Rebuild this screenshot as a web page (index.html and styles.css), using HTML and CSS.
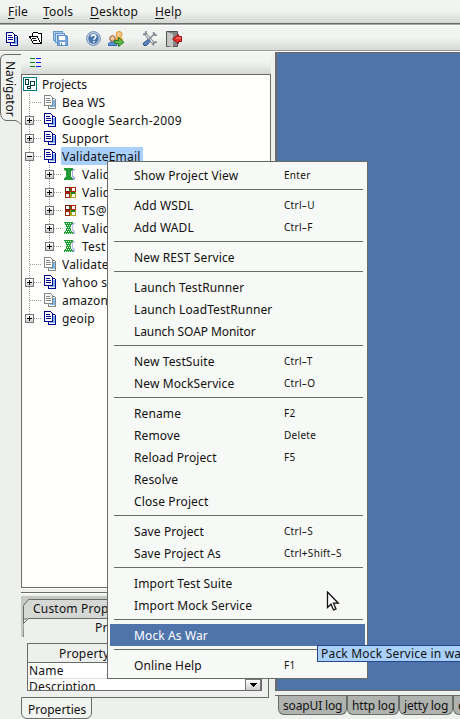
FILE: index.html
```html
<!DOCTYPE html>
<html lang="en">
<head>
<meta charset="utf-8">
<title>soapUI</title>
<link rel="stylesheet" href="styles.css">
</head>
<body>
<svg class="defs" width="0" height="0">
  <symbol id="docs" viewBox="0 0 13 14">
    <path fill="#fff" stroke="currentColor" d="M4.500 3.500h6l1 1v9h-7z"/>
    <path class="accent" d="M9 5h2v7H9zM6 11h4v1H6z"/>
    <path fill="#fff" stroke="currentColor" d="M.5.5h6l2 2v8h-8z"/>
    <path fill="currentColor" d="M2 3h4v1H2zM2 5h5v1H2zM2 7h5v1H2z"/>
  </symbol>
  <symbol id="suite" viewBox="0 0 12 12">
    <path fill="#a7a4f0" d="M8 1h3v1h-1v1H9v5h1v1h1v3H9V9H8z"/>
    <path fill="#239b34" d="M0 0h9v2H8v1H7v6h1v1h1v2H0v-2h1V9h1V3H1V2H0z"/>
  </symbol>
  <symbol id="suite-off" viewBox="0 0 12 12">
    <path fill="#b9b7f2" d="M8 1h3v1h-1v1H9v5h1v1h1v3H9V9H8z"/>
    <path fill="#239b34" d="M0 0h9v2H8v1H7v6h1v1h1v2H0v-2h1V9h1V3H1V2H0z"/>
    <path stroke="#d7f0da" stroke-dasharray="1 1" d="M0 1.500h8M3 3.500h4M2 5.500h5M3 7.500h4M0 9.500h8M1 11.500h8"/>
  </symbol>
  <symbol id="mock" viewBox="0 0 11 11">
    <path d="M0 0h5v5H0z" fill="#7d1208"/><path d="M5 0h6v5H5z" fill="#b8270c"/>
    <path d="M0 5h5v6H0z" fill="#97280b"/><path d="M5 5h6v6H5z" fill="#a8a41b"/>
    <path d="M6 5h4v2H6z" fill="#16802a"/><path d="M4 2h2v2H4z" fill="#16802a"/>
    <path fill="#fff" d="M1 1h3v3H1zM7 1h3v3H7zM1 7h3v3H1zM7 7h3v3H7z"/>
  </symbol>
</svg>

<div class="app">
  <nav class="menubar"><span><u>F</u>ile</span><span><u>T</u>ools</span><span><u>D</u>esktop</span><span><u>H</u>elp</span></nav>

  <div class="toolbar">
    <svg class="docs t1" width="13" height="14"><use href="#docs"/></svg>
    <svg class="t2" width="13" height="13" viewBox="0 0 13 13"><path fill="#fff" stroke="#000" d="M3.500 4v-2.500l1-1h4l1 1h2.500v10h-1"/><path fill="#fff" stroke="#000" d="M.5 4.500h8l3 7H4.500z"/><path d="M3 6h4v1H3zM4 8h4v1H4z"/></svg>
    <svg class="t3" width="15" height="15" viewBox="0 0 15 15"><path fill="#a9c6e8" stroke="#6597cd" d="M.5.5h9v9h-9z"/><path fill="#c9def5" stroke="#6597cd" d="M2.500 2.500h9v9h-9z"/><path fill="#76a4d8" stroke="#5a90ce" d="M4.500 4.500h9l1 1v9h-10z"/><path fill="#fff" d="M6 5h6v4H6zM7 11h5v3H7z"/><path fill="#467fbd" d="M8 12h1v2H8z"/></svg>
    <svg class="t4 smooth" width="15" height="15" viewBox="0 0 15 15"><circle cx="7.500" cy="7.500" r="6.900" fill="#c5d2e4" stroke="#6b8bb5"/><circle cx="7.500" cy="7.500" r="5.200" fill="#4c76ae"/><path d="M5.400 5.800c0-2.600 4.400-2.600 4.400 0 0 1.500-2 1.500-2 3M7.800 10v1.500" stroke="#fff" stroke-width="1.600" fill="none"/></svg>
    <svg class="t5 smooth" width="17" height="16" viewBox="0 0 17 16"><path d="M7 9c0-4 8-4 8 0v1H7z" fill="#e9a12d"/><circle cx="11" cy="3.500" r="3" fill="#f4c98a" stroke="#dc9225"/><path d="M0 14.500c0-5 9-5 9 0z" fill="#5794d8" stroke="#3267a9"/><circle cx="4.500" cy="7.500" r="2.800" fill="#f2c79c" stroke="#8c542a"/><path d="M6.500 9.500h4v-3l5.500 4.800-5.500 4.200v-3h-4z" fill="#62b847" stroke="#277d23"/></svg>
    <svg class="t6 smooth" width="16" height="15" viewBox="0 0 16 15"><path d="M2.500 2l9.500 11" stroke="#747c84" stroke-width="2.800"/><path d="M2.500 2l9.500 11" stroke="#e5e8ea" stroke-width="1.200"/><path d="M1 3.500l3-.5V0M11.500 14.500v-3l3.500-.5" fill="none" stroke="#7b838a" stroke-width="1.400"/><path d="M13 2L6.500 9M11.500 1c0 3 1 3.500 3.500 3" stroke="#858d95" stroke-width="1.600" fill="none"/><path d="M6 8.500l-5 4 1 2h2.500l3.500-4z" fill="#5f86bf" stroke="#234f8c"/></svg>
    <svg class="t7 smooth" width="16" height="16" viewBox="0 0 16 16"><path d="M.5.500h11v15H.5z" fill="#858786" stroke="#525453"/><path d="M1 1l6 2v13l-6-1z" fill="#c5c7c5"/><path d="M15.500 5.500h-3V3.500L6.500 8l6 4.500v-2h3z" fill="#e63131" stroke="#a80c0c"/><path d="M11 6.500h4v1H9.500z" fill="#f79a94"/></svg>
  </div>

  <main class="workspace">
    <aside class="rail">
      <div class="rail-tab"><svg class="rail-edge smooth" width="21" height="72" viewBox="0 0 21 72"><path d="M21 .500H6Q.5.500.5 6v52Q.5 65.500 6 66.500h9q3 0 6 4" fill="#f0f2ef" stroke="#6a6c69"/></svg><span>Navigator</span></div>
    </aside>
    <section class="navigator">
      <div class="nav-tools"><svg width="11" height="9" viewBox="0 0 11 9"><path fill="#008a00" d="M0 0h5v1H0zM0 4h5v1H0zM0 8h5v1H0z"/><path fill="#1414ff" d="M6 0h5v1H6zM6 4h5v1H6zM6 8h5v1H6z"/></svg></div>
      <div class="tree">
        <div class="row root"><svg width="15" height="15" viewBox="0 0 15 15"><path fill="#fff" stroke="#007878" d="M.5.500h13v13H.5z"/><path fill="none" stroke="#003c44" d="M2.500 2.500h3v5h-3zM7.500 4.500h4v4h-4zM4.500 9.500h3v2h-3z"/></svg><span>Projects</span></div>
        <div class="row leaf off"><i class="box none"></i><svg class="ic" width="13" height="14"><use href="#docs"/></svg><span>Bea WS</span></div>
        <div class="row"><i class="box plus"></i><svg class="ic docs" width="13" height="14"><use href="#docs"/></svg><span class="wide">Google Search-2009</span></div>
        <div class="row"><i class="box plus"></i><svg class="ic docs" width="13" height="14"><use href="#docs"/></svg><span>Support</span></div>
        <div class="row"><i class="box"></i><svg class="ic docs" width="13" height="14"><use href="#docs"/></svg><span class="picked">ValidateEmail</span></div>
        <div class="kids">
          <div class="row"><i class="box plus"></i><svg class="ic" width="12" height="12"><use href="#suite"/></svg><span>Valid</span></div>
          <div class="row"><i class="box plus"></i><svg class="ic" width="11" height="11"><use href="#mock"/></svg><span>Valid</span></div>
          <div class="row"><i class="box plus"></i><svg class="ic" width="11" height="11"><use href="#mock"/></svg><span>TS@</span></div>
          <div class="row"><i class="box plus"></i><svg class="ic" width="12" height="12"><use href="#suite-off"/></svg><span>Valid</span></div>
          <div class="row"><i class="box plus"></i><svg class="ic" width="12" height="12"><use href="#suite-off"/></svg><span>Test</span></div>
        </div>
        <div class="row leaf off"><i class="box none"></i><svg class="ic" width="13" height="14"><use href="#docs"/></svg><span>Validate</span></div>
        <div class="row"><i class="box plus"></i><svg class="ic docs" width="13" height="14"><use href="#docs"/></svg><span>Yahoo s</span></div>
        <div class="row leaf off"><i class="box none"></i><svg class="ic" width="13" height="14"><use href="#docs"/></svg><span>amazon</span></div>
        <div class="row"><i class="box plus"></i><svg class="ic docs" width="13" height="14"><use href="#docs"/></svg><span>geoip</span></div>
      </div>
      <div class="splitter"></div>
      <div class="props">
        <div class="tabs">
          <svg class="tab-edge" width="247" height="48" viewBox="0 0 247 48"><path d="M0 0h247v48H0z" fill="#eef0ed"/><path d="M0 0h247v20H0zM0 20h3v21H0z" fill="#c6c8c5"/><path class="smooth" d="M2.500 41V9.500l5-6H247V23H2.500z" fill="#d6d8d5" stroke="#6a6c69"/><path class="smooth" d="M2.500 27.500l5-5H247V48H3z" fill="#eef0ed"/><path class="smooth" d="M2.500 27.500l5-5H247" fill="none" stroke="#6a6c69"/></svg>
          <div class="tab-a">Custom Prop</div>
          <div class="tab-b">Pr</div>
        </div>
        <div class="table">
          <div class="th">Property</div>
          <div class="td">Name</div>
          <div class="td cut"><span>Description</span><b><svg width="7" height="4" viewBox="0 0 7 4"><path d="M0 0h7v1H6v1H5v1H4v1H3V3H2V2H1V1H0z"/></svg></b></div>
        </div>
      </div>
      <div class="foot"><div class="foot-tab">Properties</div></div>
    </section>
    <section class="desk">
      <div class="canvas"></div>
      <div class="logs"><span class="l1">soapUI log</span><span class="l2">http log</span><span class="l3">jetty log</span><span class="l4">error log</span></div>
    </section>
  </main>

  <div class="menu">
    <p><span>Show Project View</span><kbd>Enter</kbd></p><hr>
    <p><span>Add WSDL</span><kbd>Ctrl–U</kbd></p>
    <p><span>Add WADL</span><kbd>Ctrl–F</kbd></p><hr>
    <p><span>New REST Service</span></p><hr>
    <p><span>Launch TestRunner</span></p>
    <p><span>Launch LoadTestRunner</span></p>
    <p><span class="tight">Launch SOAP Monitor</span></p><hr>
    <p><span>New TestSuite</span><kbd>Ctrl–T</kbd></p>
    <p><span>New MockService</span><kbd>Ctrl–O</kbd></p><hr>
    <p><span>Rename</span><kbd>F2</kbd></p>
    <p><span>Remove</span><kbd>Delete</kbd></p>
    <p><span>Reload Project</span><kbd>F5</kbd></p>
    <p><span>Resolve</span></p>
    <p><span>Close Project</span></p><hr>
    <p><span>Save Project</span><kbd>Ctrl–S</kbd></p>
    <p><span>Save Project As</span><kbd>Ctrl+Shift–S</kbd></p><hr>
    <p><span>Import Test Suite</span></p>
    <p><span>Import Mock Service</span></p><hr>
    <p class="hot"><span>Mock As War</span></p><hr>
    <p><span>Online Help</span><kbd>F1</kbd></p>
  </div>
  <div class="tip">Pack Mock Service in war</div>
  <svg class="pointer smooth" width="14" height="21" viewBox="0 0 14 21"><path d="M1.500 1v15.500l3.500-3.300 2.500 5.800 2.500-1.100-2.500-5.700h4.800z" fill="#fff" stroke="#111" stroke-width="1.300"/></svg>
</div>
</body>
</html>
```
FILE: styles.css
```css
* { box-sizing: border-box; }
body { margin: 0; font: 12px/18px "Noto Sans", "Open Sans", sans-serif; letter-spacing: .2px; color: #111; background: #eef0ed; }
svg { display: block; flex: none; shape-rendering: crispEdges; }
.smooth { shape-rendering: auto; }
.defs { position: absolute; }
.app { position: relative; width: 460px; height: 719px; overflow: hidden; display: flex; flex-direction: column; white-space: nowrap; }
.menubar { height: 25px; display: flex; padding: 3px 0 0 8px; background: linear-gradient(#f2f4f1 45%, #d3d5d2); border-bottom: 1px solid #a5a7a4; box-shadow: inset 0 -1px #6a6c69; }
.menubar span:nth-child(1) { width: 35px; }
.menubar span:nth-child(2) { width: 47px; }
.menubar span:nth-child(3) { width: 65px; }
.menubar u { text-underline-offset: 2px; }
.toolbar { height: 27px; display: flex; align-items: center; padding-left: 6px; background: linear-gradient(#f2f4f1 45%, #d6d8d5); border-top: 1px solid #fff; border-bottom: 1px solid #fff; box-shadow: inset 0 -1px #999b98; }
.t2 { margin-left: 10px; }
.t3 { margin-left: 11px; }
.t4 { margin-left: 18px; }
.t5 { margin-left: 7px; }
.t6 { margin-left: 17px; }
.t7 { margin-left: 8px; }
.docs { color: #000090; }
.accent { fill: #79b9ee; }
.off .accent { fill: #ccc; }
.off svg { color: #858585; }
.workspace { flex: 1; display: flex; min-height: 0; }
.rail { width: 21px; padding-top: 2px; }
.rail-tab { position: relative; width: 21px; height: 72px; }
.rail-edge { position: absolute; left: 0; top: 0; }
.rail-tab span { position: absolute; left: 1px; top: 7px; writing-mode: vertical-rl; letter-spacing: 0; }
.navigator { width: 254px; display: flex; flex-direction: column; }
.nav-tools { height: 22px; width: 250px; padding: 6px 0 0 9px; background: linear-gradient(#f2f4f1 45%, #d6d8d5); }
.tree { position: relative; width: 250px; height: 514px; border: 1px solid #6a6c69; background: #fefefc; }
.tree::before, .kids::before { content: ""; position: absolute; left: 7px; top: 18px; width: 1px; height: 225px; background: repeating-linear-gradient(#999 0 1px, transparent 1px 2px); }
.row { position: relative; height: 18px; display: flex; align-items: center; padding-left: 3px; }
.row.root { padding-left: 1px; gap: 3px; }
.row.root span { letter-spacing: 0; }
.row span { height: 18px; padding: 1px 2px 0 1px; }
.row .wide { letter-spacing: .4px; }
.box { position: relative; width: 9px; height: 9px; margin-right: 10px; border: 1px solid #777; background: linear-gradient(90deg, #000, #000) 1px 3px / 5px 1px no-repeat, linear-gradient(#fff, #ccc); }
.box.plus { background: linear-gradient(#000, #000) 1px 3px / 5px 1px no-repeat, linear-gradient(#000, #000) 3px 1px / 1px 5px no-repeat, linear-gradient(#fff, #ccc); }
.box.none { border-color: transparent; background: none; }
.box::after { content: ""; position: absolute; left: 8px; top: 3px; width: 7px; height: 1px; background: repeating-linear-gradient(90deg, #999 0 1px, transparent 1px 2px); }
.box.none::after { left: 4px; width: 11px; }
.row .ic { margin-right: 4px; }
.row .picked { background: #a8d0fb; }
.kids { position: relative; padding-left: 20px; }
.kids::before { left: 27px; top: 0; height: 81px; }
.kids .ic { width: 12px; margin-right: 5px; }
.splitter { height: 8px; border-top: 1px solid #fff; background: linear-gradient(#6a6c69, #6a6c69) 0 3px / 250px 1px no-repeat, linear-gradient(#fff, #fff) 0 4px / 250px 1px no-repeat; }
.props { width: 248px; height: 101px; border-right: 1px solid #6a6c69; }
.tabs { position: relative; height: 47px; overflow: hidden; }
.tab-edge { position: absolute; left: 0; top: 0; }
.tab-a, .tab-b { position: relative; }
.tab-a { padding: 4px 0 0 12px; }
.tab-b { padding: 1px 0 0 74px; }
.table { margin-left: 6px; width: 235px; height: 48px; border: 1px solid #6a6c69; overflow: hidden; background: #fff; }
.th { height: 19px; padding-left: 31px; line-height: 20px; background: #eef0ed; border-bottom: 1px solid #6a6c69; }
.td { height: 16px; line-height: 16px; padding-left: 1px; border-bottom: 1px solid #ddd; }
.cut { display: flex; justify-content: space-between; height: 16px; }
.cut b { width: 16px; height: 12px; display: grid; place-items: center; border: 1px solid #777; background: linear-gradient(#fff, #ccc); }
.foot { height: 22px; width: 248px; background: linear-gradient(#6a6c69, #6a6c69) 70px 0 / 178px 1px no-repeat; }
.foot-tab { width: 71px; height: 22px; padding: 3px 0 0 6px; border: 1px solid #6a6c69; border-radius: 0 0 6px 6px; background: #f2f4f1; letter-spacing: 0; }
.desk { flex: 1; min-width: 0; display: flex; flex-direction: column; }
.canvas { height: 641px; border: solid #6a6c69; border-width: 1px 0 1px 2px; background: #4f73ab; }
.logs { display: flex; height: 24px; margin-top: 4px; padding-left: 3px; border-top: 1px solid #6a6c69; }
.logs span { flex: none; height: 19px; border: 1px solid #6a6c69; border-top: 0; border-radius: 0 0 6px 6px; background: #b0b2af; padding-left: 4px; line-height: 20px; letter-spacing: -.15px; }
.l1 { width: 69px; } .l2 { width: 52px; } .l3 { width: 54px; } .l4 { width: 60px; }
.menu { position: absolute; left: 107px; top: 161px; width: 261px; height: 518px; padding: 2px; border: 1px solid #6a6c69; background: #f7f9f6; }
.menu p { margin: 0; height: 22px; line-height: 24px; padding-left: 24px; display: flex; }
.menu p span { width: 150px; letter-spacing: .12px; }
.menu p .tight { letter-spacing: -.08px; }
.menu kbd { font: 10px/23px "Noto Sans", sans-serif; letter-spacing: .3px; }
.menu hr { margin: 3px 2px 4px 4px; border: 0; height: 1px; background: #6a6c69; }
.menu .hot { background: #4f73ab; color: #fff; }
.tip { position: absolute; left: 317px; top: 645px; width: 150px; height: 17px; line-height: 16px; padding-left: 3px; border: 1px solid #28488c; background: #a8d0fb; letter-spacing: .2px; }
.pointer { position: absolute; left: 326px; top: 591px; }
```
